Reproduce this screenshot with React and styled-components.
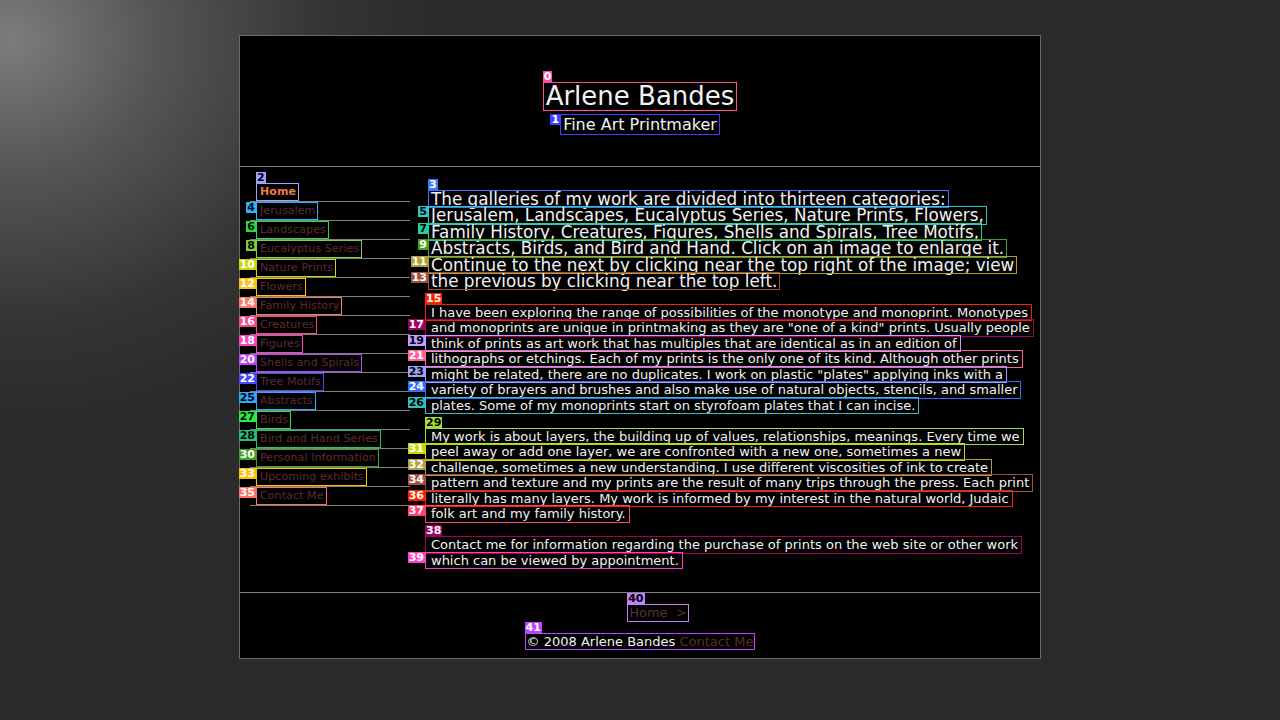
import React from "react";
import styled, { createGlobalStyle } from "styled-components";

const navItems = [
  { text: "Home", n: 2, c: "#a0a0ff", ink: "#000", pos: "top", active: true },
  { text: "Jerusalem", n: 4, c: "#30b0ff", ink: "#000" },
  { text: "Landscapes", n: 6, c: "#20e040", ink: "#000" },
  { text: "Eucalyptus Series", n: 8, c: "#80d040", ink: "#000" },
  { text: "Nature Prints", n: 10, c: "#c8d800", ink: "#fff" },
  { text: "Flowers", n: 12, c: "#ffc010", ink: "#fff" },
  { text: "Family History", n: 14, c: "#ff7a60", ink: "#fff" },
  { text: "Creatures", n: 16, c: "#ff4488", ink: "#fff" },
  { text: "Figures", n: 18, c: "#ff40c8", ink: "#fff" },
  { text: "Shells and Spirals", n: 20, c: "#c040ff", ink: "#fff" },
  { text: "Tree Motifs", n: 22, c: "#4848ff", ink: "#fff" },
  { text: "Abstracts", n: 25, c: "#30a8ff", ink: "#000" },
  { text: "Birds", n: 27, c: "#20f040", ink: "#000" },
  { text: "Bird and Hand Series", n: 28, c: "#20c080", ink: "#000" },
  { text: "Personal Information", n: 30, c: "#40a020", ink: "#fff" },
  { text: "Upcoming exhibits", n: 33, c: "#ffc000", ink: "#fff" },
  { text: "Contact Me", n: 35, c: "#ff7060", ink: "#fff" },
];

const paragraphs = [
  {
    big: true,
    lines: [
      { t: "The galleries of my work are divided into thirteen categories:", n: 3, c: "#3b78ff", ink: "#fff", pos: "top" },
      { t: "Jerusalem, Landscapes, Eucalyptus Series, Nature Prints, Flowers,", n: 5, c: "#30c8c8", ink: "#000" },
      { t: "Family History, Creatures, Figures, Shells and Spirals, Tree Motifs,", n: 7, c: "#20d0a0", ink: "#000" },
      { t: "Abstracts, Birds, and Bird and Hand. Click on an image to enlarge it.", n: 9, c: "#4aa020", ink: "#fff" },
      { t: "Continue to the next by clicking near the top right of the image; view", n: 11, c: "#b0a030", ink: "#fff" },
      { t: "the previous by clicking near the top left.", n: 13, c: "#a05040", ink: "#fff" },
    ],
  },
  {
    lines: [
      { t: "I have been exploring the range of possibilities of the monotype and monoprint. Monotypes", n: 15, c: "#ff2000", ink: "#fff", pos: "top" },
      { t: "and monoprints are unique in printmaking as they are \"one of a kind\" prints. Usually people", n: 17, c: "#a00060", ink: "#fff" },
      { t: "think of prints as art work that has multiples that are identical as in an edition of", n: 19, c: "#c0a0ff", ink: "#000" },
      { t: "lithographs or etchings. Each of my prints is the only one of its kind. Although other prints", n: 21, c: "#ff60a0", ink: "#fff" },
      { t: "might be related, there are no duplicates. I work on plastic \"plates\" applying inks with a", n: 23, c: "#a0a0ff", ink: "#000" },
      { t: "variety of brayers and brushes and also make use of natural objects, stencils, and smaller", n: 24, c: "#3070ff", ink: "#fff" },
      { t: "plates. Some of my monoprints start on styrofoam plates that I can incise.", n: 26, c: "#30c0c0", ink: "#000" },
    ],
  },
  {
    lines: [
      { t: "My work is about layers, the building up of values, relationships, meanings. Every time we", n: 29, c: "#a0e030", ink: "#000", pos: "top" },
      { t: "peel away or add one layer, we are confronted with a new one, sometimes a new", n: 31, c: "#c8d800", ink: "#fff" },
      { t: "challenge, sometimes a new understanding. I use different viscosities of ink to create", n: 32, c: "#b0a040", ink: "#fff" },
      { t: "pattern and texture and my prints are the result of many trips through the press. Each print", n: 34, c: "#a05040", ink: "#fff" },
      { t: "literally has many layers. My work is informed by my interest in the natural world, Judaic", n: 36, c: "#ff2000", ink: "#fff" },
      { t: "folk art and my family history.", n: 37, c: "#ff4070", ink: "#fff" },
    ],
  },
  {
    lines: [
      { t: "Contact me for information regarding the purchase of prints on the web site or other work", n: 38, c: "#a00060", ink: "#fff", pos: "top" },
      { t: "which can be viewed by appointment.", n: 39, c: "#ff40c0", ink: "#fff" },
    ],
  },
];

function Badge({ n, c, ink, pos }) {
  return (
    <Tag $c={c} $ink={ink} $pos={pos || "left"}>
      {n}
    </Tag>
  );
}

export default function App() {
  return (
    <>
      <GlobalStyle />
      <Page>
        <Frame>
          <Masthead>
            <Title>
              Arlene Bandes
              <Badge n={0} c="#ff4fa0" ink="#fff" pos="top" />
            </Title>
            <Subtitle>
              Fine Art Printmaker
              <Badge n={1} c="#4040ff" ink="#fff" />
            </Subtitle>
          </Masthead>

          <Columns>
            <SideNav>
              {navItems.map((item) => (
                <NavItem key={item.n}>
                  <NavLink href="#" $c={item.c} $active={item.active}>
                    {item.text}
                    <Badge n={item.n} c={item.c} ink={item.ink} pos={item.pos} />
                  </NavLink>
                </NavItem>
              ))}
            </SideNav>

            <Content>
              {paragraphs.map((p, i) => (
                <Paragraph key={i} $big={p.big}>
                  {p.lines.map((l) => (
                    <Line key={l.n} $c={l.c} $big={p.big}>
                      {l.t}
                      <Badge n={l.n} c={l.c} ink={l.ink} pos={l.pos} />
                    </Line>
                  ))}
                </Paragraph>
              ))}
            </Content>
          </Columns>

          <Footer>
            <FooterRow $shift="36px">
              <Marked $c="#c080ff">
                <FooterLink href="#">Home&nbsp;&nbsp;&gt;</FooterLink>
                <Badge n={40} c="#c080ff" ink="#000" pos="top" />
              </Marked>
            </FooterRow>
            <FooterRow>
              <Marked $c="#c040ff">
                © 2008 Arlene Bandes <FooterLink href="#">Contact Me</FooterLink>
                <Badge n={41} c="#c040ff" ink="#fff" pos="top" />
              </Marked>
            </FooterRow>
          </Footer>
        </Frame>
      </Page>
    </>
  );
}

const GlobalStyle = createGlobalStyle`
  html, body {
    margin:0;
    padding:0;
  }
  body{
    min-height:100vh;
    font-family:"DejaVu Sans", Verdana, sans-serif;
    background:#2a2a2a radial-gradient(ellipse 420px 380px at 12px 40px, #7c7c7c 0%, #555 35%, #343434 75%, #2b2b2b 100%);
  }
  a{ text-decoration:none; }
`;

const Page = styled.div`
  padding-top:35px;
  min-height:720px;
  box-sizing:border-box;
`;

const Frame = styled.div`
  width:800px;
  margin:0 auto;
  background:#000;
  border:1px solid #6a6a6a;
  color:#f2f2f2;
`;

const Masthead = styled.header`
  padding:47px 0 32px;
  border-bottom:1px solid #808080;
  display:flex;
  flex-direction:column;
  align-items:center;
  gap:5px;
`;

const Marked = styled.span`
  position:relative;
  display:inline-block;
  padding:0 1px;
  outline:1px solid ${(p) => p.$c};
`;

const Title = styled.h1`
  position:relative;
  margin:0;
  font-size:26px;
  font-weight:normal;
  line-height:27px;
  padding:0 2px;
  outline:1px solid #ff4fa0;
`;

const Subtitle = styled.h2`
  position:relative;
  margin:0;
  font-size:16px;
  font-weight:normal;
  line-height:19px;
  padding:0 2px;
  outline:1px solid #4040ff;
`;

const Tag = styled.span`
  position:absolute;
  ${(p) =>
    p.$pos === "top"
      ? "left:-1px; bottom:calc(100% + 1px);"
      : "right:calc(100% + 1px); top:-1px;"}
  background:${(p) => p.$c};
  color:${(p) => p.$ink};
  font:bold 11px/11px "DejaVu Sans", sans-serif;
  padding:0 1px;
  white-space:nowrap;
  letter-spacing:0;
`;

const Columns = styled.div`
  display:flex;
  align-items:flex-start;
`;

const SideNav = styled.ul`
  list-style:none;
  margin:0;
  padding:16px 0 0 10px;
  width:160px;
  flex-shrink:0;
`;

const NavItem = styled.li`
  height:18px;
  border-bottom:1px solid #808080;
  display:flex;
  align-items:center;
`;

const NavLink = styled.a`
  position:relative;
  margin-left:7px;
  padding:0 2px 0 3px;
  font-size:11px;
  line-height:16px;
  letter-spacing:0.1px;
  color:${(p) => (p.$active ? "#ec7a3a" : "#5e2c2e")};
  font-weight:${(p) => (p.$active ? "bold" : "normal")};
  outline:1px solid ${(p) => p.$c};
  white-space:nowrap;
`;

const Content = styled.main`
  padding:24px 0 24px 21px;
  display:flex;
  flex-direction:column;
  gap:15.5px;
`;

const Paragraph = styled.div`
  font-size:${(p) => (p.$big ? "16.8px" : "13px")};
  line-height:${(p) => (p.$big ? "16.4px" : "15.5px")};
`;

const Line = styled.span`
  position:relative;
  display:block;
  width:fit-content;
  white-space:nowrap;
  padding:${(p) => (p.$big ? "0 2px" : "0 3px 0 5px")};
  margin-left:${(p) => (p.$big ? "-2px" : "-5px")};
  outline:1px solid ${(p) => p.$c};
`;

const Footer = styled.footer`
  border-top:1px solid #808080;
  padding:12px 0 9px;
  display:flex;
  flex-direction:column;
  align-items:center;
  gap:13px;
  font-size:13px;
  line-height:15.5px;
`;

const FooterRow = styled.div`
  text-align:center;
  padding-left:${(p) => p.$shift || "0"};
`;

const FooterLink = styled.a`
  color:#5e2c2e;
`;
